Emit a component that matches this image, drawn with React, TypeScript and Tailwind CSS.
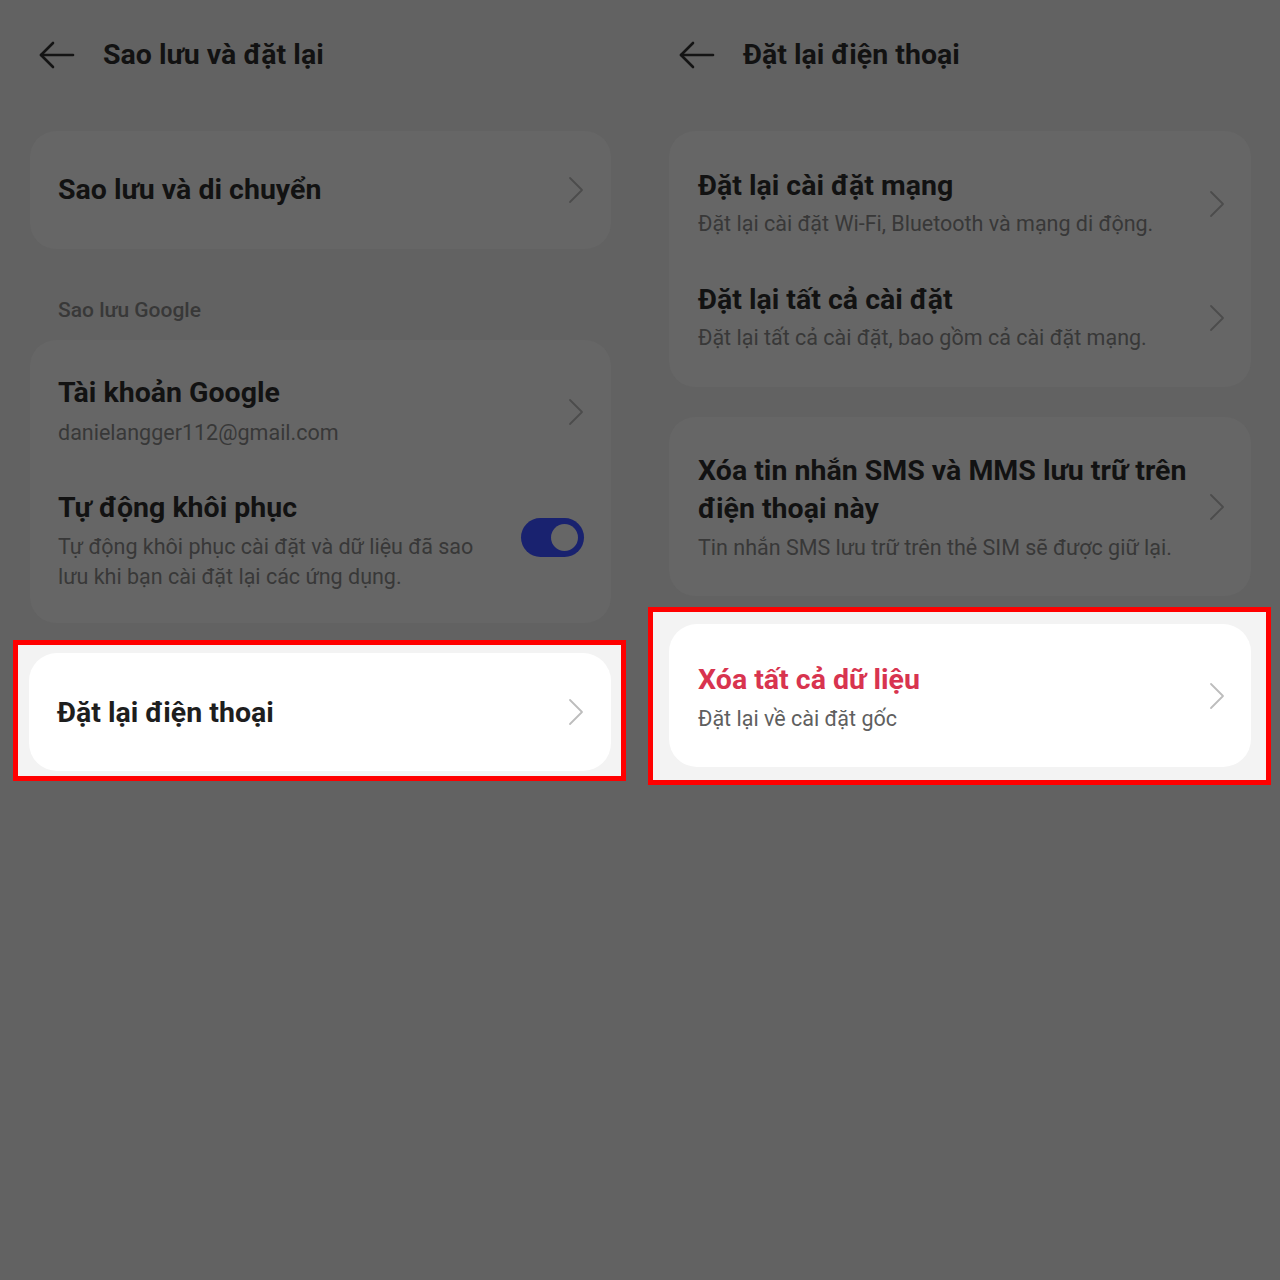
import type { ReactNode } from 'react'

function Chevron({ dim = true }: { dim?: boolean }) {
  return (
    <svg width="16" height="28" viewBox="0 0 16 28" fill="none" className="shrink-0">
      <polyline
        points="2,2 14,14 2,26"
        stroke={dim ? '#4c4c4c' : '#bdbdbd'}
        strokeWidth="1.8"
        strokeLinecap="round"
        strokeLinejoin="round"
      />
    </svg>
  )
}

function BackArrow() {
  return (
    <svg width="36" height="28" viewBox="0 0 36 28" fill="none">
      <line x1="2" y1="14" x2="34" y2="14" stroke="#141414" strokeWidth="2.6" strokeLinecap="round" />
      <polyline points="14,2 2,14 14,26" stroke="#141414" strokeWidth="2.6" strokeLinecap="round" strokeLinejoin="round" />
    </svg>
  )
}

function Header({ title }: { title: string }) {
  return (
    <div className="flex h-[110px] items-center pl-[39px]">
      <BackArrow />
      <span className="ml-[28px] text-[28.5px] font-bold leading-none text-[#121212]">{title}</span>
    </div>
  )
}

function Highlight({ children, className }: { children: ReactNode; className: string }) {
  return <div className={`border-[5px] border-[#ff0000] bg-[#f3f3f3] ${className}`}>{children}</div>
}

const titleCls = 'text-[28.5px] font-bold leading-[34px] text-[#121212]'
const subCls = 'text-[21.5px] leading-[28px] text-[#383838]'

function LeftPanel() {
  return (
    <div className="flex w-[640px] flex-col">
      <Header title="Sao lưu và đặt lại" />

      <div className="ml-[30px] mr-[29px] mt-[21px] flex h-[118px] items-center justify-between rounded-[26px] bg-[#666666] pl-[28px] pr-[27px]">
        <span className={titleCls}>Sao lưu và di chuyển</span>
        <Chevron />
      </div>

      <div className="ml-[58px] mt-[47px] text-[21px] font-medium leading-[28px] text-[#383838]">Sao lưu Google</div>

      <div className="ml-[30px] mr-[29px] mt-[16px] flex h-[283px] flex-col rounded-[26px] bg-[#666666] pl-[28px] pr-[27px] pt-[36px]">
        <div className="flex items-center justify-between">
          <div className="flex flex-col">
            <span className={titleCls}>Tài khoản Google</span>
            <span className={`mt-[9px] ${subCls}`}>danielangger112@gmail.com</span>
          </div>
          <Chevron />
        </div>
        <div className="mt-[44px] flex items-center justify-between">
          <div className="flex flex-col">
            <span className={titleCls}>Tự động khôi phục</span>
            <span className="mt-[7px] w-[430px] text-[21.5px] leading-[30px] text-[#383838]">
              Tự động khôi phục cài đặt và dữ liệu đã sao lưu khi bạn cài đặt lại các ứng dụng.
            </span>
          </div>
          <div className="mt-[-8px] flex h-[39px] w-[63px] shrink-0 items-center justify-end rounded-full bg-[#19226f] pr-[6px]">
            <div className="h-[27px] w-[27px] rounded-full bg-[#666666]" />
          </div>
        </div>
      </div>

      <Highlight className="ml-[13px] mr-[14px] mt-[17px] pb-[5px] pl-[11px] pr-[10px] pt-[8px]">
        <div className="flex h-[118px] items-center justify-between rounded-[28px] bg-white pl-[28px] pr-[27px]">
          <span className="mt-[3px] text-[28.5px] font-bold text-[#1e1e1e]">Đặt lại điện thoại</span>
          <Chevron dim={false} />
        </div>
      </Highlight>
    </div>
  )
}

function RightPanel() {
  return (
    <div className="flex w-[640px] flex-col">
      <Header title="Đặt lại điện thoại" />

      <div className="ml-[29px] mr-[29px] mt-[21px] flex flex-col gap-[45px] rounded-[26px] bg-[#666666] pb-[35px] pl-[29px] pr-[26px] pt-[38px]">
        <div className="flex items-center justify-between">
          <div className="flex flex-col">
            <span className={titleCls}>Đặt lại cài đặt mạng</span>
            <span className={`mt-[7px] ${subCls}`}>Đặt lại cài đặt Wi-Fi, Bluetooth và mạng di động.</span>
          </div>
          <Chevron />
        </div>
        <div className="flex items-center justify-between">
          <div className="flex flex-col">
            <span className={titleCls}>Đặt lại tất cả cài đặt</span>
            <span className={`mt-[7px] ${subCls}`}>Đặt lại tất cả cài đặt, bao gồm cả cài đặt mạng.</span>
          </div>
          <Chevron />
        </div>
      </div>

      <div className="ml-[29px] mr-[29px] mt-[30px] flex items-center justify-between rounded-[26px] bg-[#666666] pb-[34px] pl-[29px] pr-[26px] pt-[35px]">
        <div className="flex flex-col">
          <span className="text-[28.5px] font-bold leading-[38px] text-[#121212]">
            Xóa tin nhắn SMS và MMS lưu trữ trên
            <br />
            điện thoại này
          </span>
          <span className={`mt-[6px] ${subCls}`}>Tin nhắn SMS lưu trữ trên thẻ SIM sẽ được giữ lại.</span>
        </div>
        <Chevron />
      </div>

      <Highlight className="ml-[8px] mr-[9px] mt-[11px] pb-[13px] pl-[16px] pr-[15px] pt-[12px]">
        <div className="flex h-[143px] items-center justify-between rounded-[28px] bg-white pl-[29px] pr-[26px]">
          <div className="mt-[5px] flex flex-col">
            <span className="text-[28.5px] font-bold leading-[34px] text-[#d8344f]">Xóa tất cả dữ liệu</span>
            <span className="mt-[8px] text-[21.5px] leading-[28px] text-[#5f5f5f]">Đặt lại về cài đặt gốc</span>
          </div>
          <Chevron dim={false} />
        </div>
      </Highlight>
    </div>
  )
}

export default function App() {
  return (
    <main className="flex h-[1280px] w-[1280px] bg-[#626262] font-['Roboto',sans-serif]">
      <LeftPanel />
      <RightPanel />
    </main>
  )
}
